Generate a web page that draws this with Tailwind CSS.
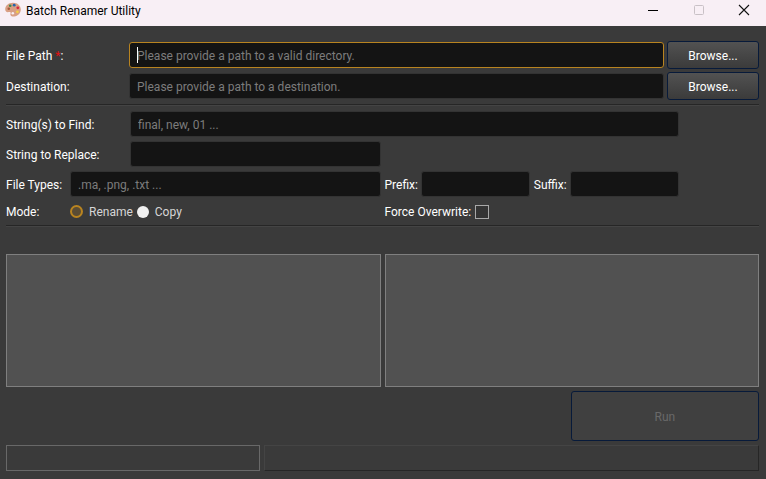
<!DOCTYPE html>
<html lang="en">
<head>
<meta charset="utf-8">
<title>Batch Renamer Utility</title>
<script src="https://cdn.jsdelivr.net/npm/@tailwindcss/browser@4"></script>
</head>
<body class="flex min-h-screen flex-col bg-[#3a3a3a] font-['Segoe_UI','Roboto',sans-serif] text-[12px] leading-4 text-white">
<header class="flex h-[26px] items-start bg-[#f8eff5] text-black">
  <div class="flex h-5 flex-1 items-center gap-[5px] pl-[5px]">
    <svg class="h-4 w-4" viewBox="0 0 16 16" aria-hidden="true">
      <path d="M8 .8C3.600 .8 .2 3.700 .2 7.300c0 1.700 1 2.900 2.500 2.900 1.200 0 2.100-.6 2.700.1.700.8-.4 1.500.1 2.700.5 1.200 2 1.700 3.700 1.500 3.800-.4 6.600-3.300 6.600-6.900C15.800 3.700 12.400.8 8 .8z" fill="#d99f84"/>
      <circle cx="7.800" cy="11.200" r="1.300" fill="#f8eff5"/>
      <circle cx="3.800" cy="6.800" r="1.300" fill="#a85a3c"/>
      <circle cx="5.200" cy="3.800" r="1.300" fill="#3f8a4a"/>
      <circle cx="9.200" cy="3.200" r="1.400" fill="#2265b0"/>
      <circle cx="12.800" cy="5.800" r="1.400" fill="#d9263c"/>
      <circle cx="12.400" cy="9.800" r="1.400" fill="#f5cf45"/>
    </svg>
    <h1 class="pt-0.5">Batch Renamer Utility</h1>
  </div>
  <div class="flex h-5">
    <button aria-label="Minimize" class="flex w-[46px] items-center justify-center"><svg class="h-3 w-3" viewBox="0 0 12 12" fill="none" stroke="#000"><path d="M1 6.500h10"/></svg></button>
    <button aria-label="Maximize" disabled class="flex w-[46px] items-center justify-center"><svg class="h-3 w-3" viewBox="0 0 12 12" fill="none" stroke="#c9c1c6"><rect x="1.500" y="1.500" width="9" height="9" rx="1"/></svg></button>
    <button aria-label="Close" class="flex w-11 items-center justify-center"><svg class="h-3 w-3" viewBox="0 0 12 12" fill="none" stroke="#111" stroke-width="1.100"><path d="M1 1l10 10M11 1L1 11"/></svg></button>
  </div>
</header>

<main class="flex flex-1 flex-col pt-[15px] pr-[7px] pb-2 pl-[6px]">
  <form class="flex flex-col">
    <div class="flex flex-col gap-[3px]">
      <div class="flex items-center">
        <label for="path" class="w-[123px] pt-0.5">File Path <span class="text-[#e01010]">*</span>:</label>
        <div class="relative mr-[3px] flex-1">
          <input id="path" type="text" placeholder="Please provide a path to a valid directory." class="block h-[26px] w-full rounded-[3px] border border-[#b98420] bg-[#141414] px-[7px] pt-0.5 outline-none placeholder:text-[#7c7c7c]">
          <span class="absolute top-[5px] left-2 h-4 w-px bg-white"></span>
        </div>
        <button type="button" class="h-7 w-[92px] rounded-[3px] border border-[#071a3a] bg-linear-to-b from-[#525252] to-[#3b3b3b] pt-0.5">Browse...</button>
      </div>
      <div class="flex items-center">
        <label for="dest" class="w-[123px] pt-0.5">Destination:</label>
        <input id="dest" type="text" placeholder="Please provide a path to a destination." class="mr-[3px] h-[26px] min-w-0 flex-1 rounded-[3px] border border-[#333] bg-[#141414] px-[7px] pt-0.5 outline-none placeholder:text-[#7c7c7c]">
        <button type="button" class="h-7 w-[92px] rounded-[3px] border border-[#071a3a] bg-linear-to-b from-[#525252] to-[#3b3b3b] pt-0.5">Browse...</button>
      </div>
    </div>
    <hr class="mt-1 h-[2px] border-t border-b border-t-[#262626] border-b-[#444]">
    <div class="mt-[5px] flex flex-col gap-1">
      <div class="flex items-center pr-20">
        <label for="find" class="w-[124px] pt-0.5">String(s) to Find:</label>
        <input id="find" type="text" placeholder="final, new, 01 ..." class="h-[26px] min-w-0 flex-1 rounded-[3px] border border-[#333] bg-[#141414] px-[7px] pt-0.5 outline-none placeholder:text-[#7c7c7c]">
      </div>
      <div class="grid grid-cols-2 gap-1">
        <div class="flex items-center">
          <label for="replace" class="w-[124px] pt-0.5">String to Replace:</label>
          <input id="replace" type="text" class="h-[26px] min-w-0 flex-1 rounded-[3px] border border-[#333] bg-[#141414] px-[7px] pt-0.5 outline-none">
        </div>
      </div>
      <div class="grid grid-cols-2 gap-1">
        <div class="flex items-center">
          <label for="types" class="w-16 pt-0.5">File Types:</label>
          <input id="types" type="text" placeholder=".ma, .png, .txt ..." class="h-[26px] min-w-0 flex-1 rounded-[3px] border border-[#333] bg-[#141414] px-[7px] pt-0.5 outline-none placeholder:text-[#7c7c7c]">
        </div>
        <div class="flex items-center pr-20">
          <label for="prefix" class="w-9 pt-0.5">Prefix:</label>
          <input id="prefix" type="text" class="mr-1 h-[26px] min-w-0 flex-1 rounded-[3px] border border-[#333] bg-[#141414] px-[7px] pt-0.5 outline-none">
          <label for="suffix" class="w-9 pt-0.5">Suffix:</label>
          <input id="suffix" type="text" class="h-[26px] min-w-0 flex-1 rounded-[3px] border border-[#333] bg-[#141414] px-[7px] pt-0.5 outline-none">
        </div>
      </div>
    </div>
    <div class="mt-[5px] grid h-[19px] grid-cols-2 gap-1">
      <div role="radiogroup" aria-labelledby="mode" class="flex items-center text-[#d6d6d6]">
        <span id="mode" class="w-16 text-white">Mode:</span>
        <input id="rename" name="mode" type="radio" checked class="h-[13px] w-[13px] appearance-none rounded-full border-2 border-[#b98420] bg-[#5a4c34]">
        <label for="rename" class="mr-1 ml-[6px]">Rename</label>
        <input id="copy" name="mode" type="radio" class="h-3 w-3 appearance-none rounded-full bg-[#f0f0f0]">
        <label for="copy" class="ml-[6px]">Copy</label>
      </div>
      <div class="flex items-center gap-1">
        <label for="force">Force Overwrite:</label>
        <input id="force" type="checkbox" class="h-[14px] w-[14px] appearance-none border border-[#a8a8a8] bg-[#343434]">
      </div>
    </div>
    <hr class="mt-1 h-[2px] border-t border-b border-t-[#262626] border-b-[#444]">
  </form>

  <section class="mt-[27px] grid flex-1 grid-cols-2 gap-1">
    <div class="border border-[#7f7f7f] bg-[#515151]"></div>
    <div class="border border-[#7f7f7f] bg-[#515151]"></div>
  </section>
  <button type="button" disabled class="mt-1 h-[50px] w-1/4 self-end rounded-[3px] border border-[#071a3a] bg-[#404040] pt-0.5 text-[#696969]">Run</button>
  <footer class="mt-1 flex h-[26px] gap-1">
    <div class="w-[254px] border border-[#686868]"></div>
    <div class="flex-1 border border-t-[#444] border-r-[#262626] border-b-[#262626] border-l-[#444]"></div>
  </footer>
</main>
</body>
</html>
